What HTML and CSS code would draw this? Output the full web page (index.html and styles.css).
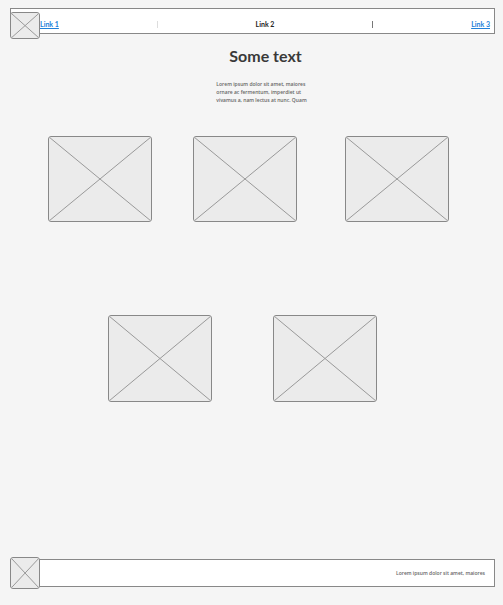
FILE: index.html
```html
<!DOCTYPE html>
<html lang="en">
<head>
<meta charset="utf-8">
<meta name="viewport" content="width=device-width, initial-scale=1">
<title>Some text</title>
<link rel="stylesheet" href="styles.css">
</head>
<body>
<header class="bar header">
  <svg class="placeholder logo" aria-hidden="true"><line x1="1" y1="1" x2="97%" y2="97%"/><line x1="97%" y1="1" x2="1" y2="97%"/></svg>
  <nav class="nav">
    <a class="link" href="#one">Link 1</a>
    <span class="divider divider-light"></span>
    <a class="link link-current" href="#two">Link 2</a>
    <span class="divider"></span>
    <a class="link" href="#three">Link 3</a>
  </nav>
</header>
<main class="main">
  <h1 class="title">Some text</h1>
  <p class="intro">Lorem ipsum dolor sit amet, maiores<br>ornare ac fermentum, imperdiet ut<br>vivamus a, nam lectus at nunc. Quam</p>
  <div class="row row-three">
    <svg class="placeholder picture" role="img" aria-label="Picture"><line x1="1%" y1="1%" x2="99%" y2="99%"/><line x1="99%" y1="1%" x2="1%" y2="99%"/></svg>
    <svg class="placeholder picture" role="img" aria-label="Picture"><line x1="1%" y1="1%" x2="99%" y2="99%"/><line x1="99%" y1="1%" x2="1%" y2="99%"/></svg>
    <svg class="placeholder picture" role="img" aria-label="Picture"><line x1="1%" y1="1%" x2="99%" y2="99%"/><line x1="99%" y1="1%" x2="1%" y2="99%"/></svg>
  </div>
  <div class="row row-two">
    <svg class="placeholder picture" role="img" aria-label="Picture"><line x1="1%" y1="1%" x2="99%" y2="99%"/><line x1="99%" y1="1%" x2="1%" y2="99%"/></svg>
    <svg class="placeholder picture" role="img" aria-label="Picture"><line x1="1%" y1="1%" x2="99%" y2="99%"/><line x1="99%" y1="1%" x2="1%" y2="99%"/></svg>
  </div>
</main>
<footer class="bar footer">
  <svg class="placeholder logo logo-footer" aria-hidden="true"><line x1="1" y1="1" x2="97%" y2="97%"/><line x1="97%" y1="1" x2="1" y2="97%"/></svg>
  <p class="note">Lorem ipsum dolor sit amet, maiores</p>
</footer>
</body>
</html>
```
FILE: styles.css
```css
* {
  box-sizing: border-box;
}

body {
  display: flex;
  flex-direction: column;
  min-height: 100vh;
  margin: 0;
  padding: 8px 8px 18px 10px;
  background: #f5f5f5;
  color: #393939;
  font-family: Lato, "Liberation Sans", sans-serif;
}

.bar {
  position: relative;
  border: 1px solid #888;
  background: #fff;
}

.header {
  padding: 11px 4px 4px 29px;
}

.nav {
  display: flex;
  align-items: center;
  justify-content: space-between;
}

.link {
  color: #2181d9;
  font-size: 7px;
  font-weight: 700;
  line-height: 9px;
}

.link-current {
  color: #222;
  text-decoration: none;
}

.divider {
  width: 1px;
  height: 7px;
  background: #777;
}

.divider-light {
  background: #ddd;
}

.placeholder {
  display: block;
  border: 1px solid #888;
  border-radius: 3px;
  background: #ebebeb;
}

.placeholder line {
  stroke: #999;
  stroke-width: 1px;
}

.logo {
  position: absolute;
  top: 3px;
  left: -1px;
  width: 30px;
  height: 27px;
}

.logo-footer {
  top: -3px;
  height: 32px;
}

.main {
  flex: 1;
}

.title {
  margin: 12px 0 0 26px;
  font-size: 16px;
  line-height: 20px;
  text-align: center;
}

.intro,
.note {
  color: #666;
  font-family: "Open Sans", "Liberation Sans", sans-serif;
  font-size: 5px;
  font-weight: 600;
  line-height: 8px;
}

.intro {
  width: max-content;
  margin: 14px auto 0;
  padding-left: 18px;
}

.row-three {
  display: grid;
  grid-template-columns: 145fr 152fr 104fr;
  margin: 32px 46px 0 38px;
}

.row-two {
  display: flex;
  justify-content: space-between;
  margin: 93px 118px 0 98px;
}

.picture {
  width: 104px;
  height: 86px;
}

.row-two .picture {
  height: 87px;
}

.footer {
  padding: 9px;
}

.note {
  margin: 0;
  text-align: right;
}
```
